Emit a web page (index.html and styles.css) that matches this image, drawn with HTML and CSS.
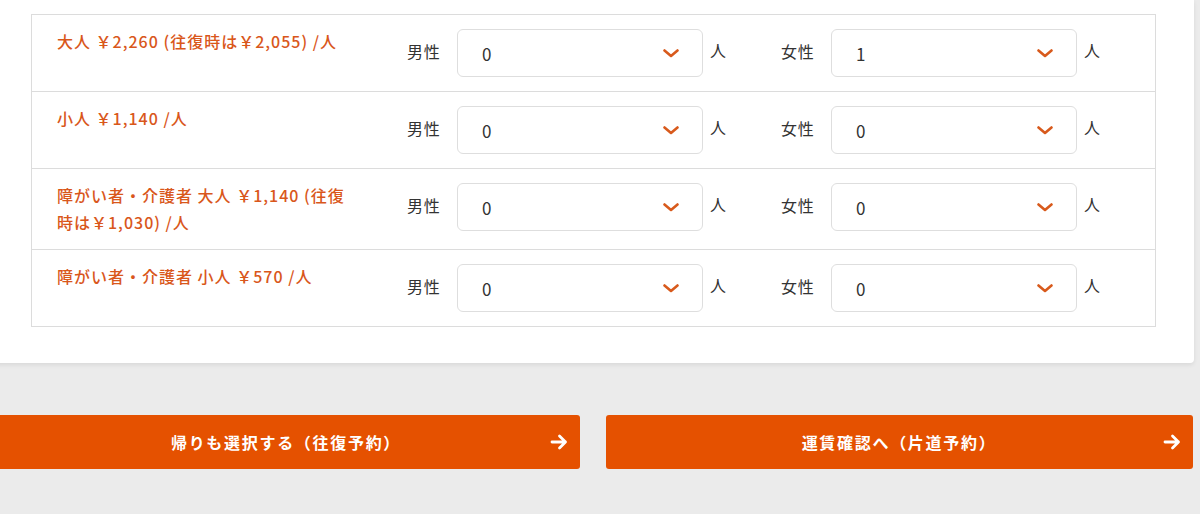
FILE: index.html
```html
<!DOCTYPE html>
<html lang="ja">
<head>
<meta charset="utf-8">
<title>運賃</title>
<link rel="stylesheet" href="styles.css">
</head>
<body>
<div class="page">
  <div class="card">
    <div class="fare-table">
      <div class="fare-row">
        <div class="fare-label">大人 ￥2,260 (往復時は￥2,055) /人</div>
        <div class="gender">
          <span class="g-label">男性</span>
          <div class="select"><span class="val">0</span><svg class="chev" viewBox="0 0 16 9" width="16" height="9"><path d="M1.5 1.5 L8 7 L14.5 1.5" fill="none" stroke="#d85a1c" stroke-width="2.6" stroke-linejoin="round" stroke-linecap="round"/></svg></div>
          <span class="unit">人</span>
        </div>
        <div class="gender">
          <span class="g-label">女性</span>
          <div class="select"><span class="val">1</span><svg class="chev" viewBox="0 0 16 9" width="16" height="9"><path d="M1.5 1.5 L8 7 L14.5 1.5" fill="none" stroke="#d85a1c" stroke-width="2.6" stroke-linejoin="round" stroke-linecap="round"/></svg></div>
          <span class="unit">人</span>
        </div>
      </div>
      <div class="fare-row">
        <div class="fare-label">小人 ￥1,140 /人</div>
        <div class="gender">
          <span class="g-label">男性</span>
          <div class="select"><span class="val">0</span><svg class="chev" viewBox="0 0 16 9" width="16" height="9"><path d="M1.5 1.5 L8 7 L14.5 1.5" fill="none" stroke="#d85a1c" stroke-width="2.6" stroke-linejoin="round" stroke-linecap="round"/></svg></div>
          <span class="unit">人</span>
        </div>
        <div class="gender">
          <span class="g-label">女性</span>
          <div class="select"><span class="val">0</span><svg class="chev" viewBox="0 0 16 9" width="16" height="9"><path d="M1.5 1.5 L8 7 L14.5 1.5" fill="none" stroke="#d85a1c" stroke-width="2.6" stroke-linejoin="round" stroke-linecap="round"/></svg></div>
          <span class="unit">人</span>
        </div>
      </div>
      <div class="fare-row">
        <div class="fare-label">障がい者・介護者 大人 ￥1,140 (往復時は￥1,030) /人</div>
        <div class="gender">
          <span class="g-label">男性</span>
          <div class="select"><span class="val">0</span><svg class="chev" viewBox="0 0 16 9" width="16" height="9"><path d="M1.5 1.5 L8 7 L14.5 1.5" fill="none" stroke="#d85a1c" stroke-width="2.6" stroke-linejoin="round" stroke-linecap="round"/></svg></div>
          <span class="unit">人</span>
        </div>
        <div class="gender">
          <span class="g-label">女性</span>
          <div class="select"><span class="val">0</span><svg class="chev" viewBox="0 0 16 9" width="16" height="9"><path d="M1.5 1.5 L8 7 L14.5 1.5" fill="none" stroke="#d85a1c" stroke-width="2.6" stroke-linejoin="round" stroke-linecap="round"/></svg></div>
          <span class="unit">人</span>
        </div>
      </div>
      <div class="fare-row">
        <div class="fare-label">障がい者・介護者 小人 ￥570 /人</div>
        <div class="gender">
          <span class="g-label">男性</span>
          <div class="select"><span class="val">0</span><svg class="chev" viewBox="0 0 16 9" width="16" height="9"><path d="M1.5 1.5 L8 7 L14.5 1.5" fill="none" stroke="#d85a1c" stroke-width="2.6" stroke-linejoin="round" stroke-linecap="round"/></svg></div>
          <span class="unit">人</span>
        </div>
        <div class="gender">
          <span class="g-label">女性</span>
          <div class="select"><span class="val">0</span><svg class="chev" viewBox="0 0 16 9" width="16" height="9"><path d="M1.5 1.5 L8 7 L14.5 1.5" fill="none" stroke="#d85a1c" stroke-width="2.6" stroke-linejoin="round" stroke-linecap="round"/></svg></div>
          <span class="unit">人</span>
        </div>
      </div>
    </div>
  </div>
  <div class="actions">
    <a class="btn" href="#"><span class="btn-text">帰りも選択する（往復予約）</span><svg class="arrow" viewBox="0 0 18 16" width="18" height="16"><path d="M2 8 H15.5 M9.5 2 L15.5 8 L9.5 14" fill="none" stroke="#fff" stroke-width="2.8" stroke-linecap="round" stroke-linejoin="round"/></svg></a>
    <a class="btn" href="#"><span class="btn-text">運賃確認へ（片道予約）</span><svg class="arrow" viewBox="0 0 18 16" width="18" height="16"><path d="M2 8 H15.5 M9.5 2 L15.5 8 L9.5 14" fill="none" stroke="#fff" stroke-width="2.8" stroke-linecap="round" stroke-linejoin="round"/></svg></a>
  </div>
</div>
</body>
</html>
```

FILE: styles.css
```css
html, body {
  margin: 0;
  padding: 0;
}
body {
  background: #ebebeb;
  font-family: "Noto Sans CJK JP", "Noto Sans", sans-serif;
  color: #333;
  letter-spacing: 0.05em;
  overflow: hidden;
}
.page {
  width: 1201px;
  margin-left: -7px;
}
.card {
  background: #fff;
  padding: 14px 38px 36px;
  box-shadow: 0 2px 4px rgba(0, 0, 0, 0.08);
  border-radius: 0 0 4px 4px;
}
.fare-table {
  border: 1px solid #dcdcdc;
}
.fare-row {
  display: grid;
  grid-template-columns: 374px 374px 374px;
  border-top: 1px solid #dcdcdc;
}
.fare-row:first-child {
  border-top: none;
}
.fare-label {
  padding: 13px 54px 13px 25px;
  font-size: 16px;
  line-height: 27px;
  font-weight: 500;
  letter-spacing: 1px;
  color: #d9571b;
}
.gender {
  display: flex;
  align-items: center;
  align-self: start;
  padding: 14px 0 14px;
}
.g-label {
  font-size: 16px;
  width: 34px;
  margin-left: 1px;
  margin-right: 16px;
  color: #333;
  position: relative;
  top: -2px;
}
.select {
  box-sizing: border-box;
  width: 246px;
  height: 48px;
  border: 1px solid #dedede;
  border-radius: 6px;
  display: flex;
  align-items: center;
  justify-content: space-between;
  padding: 0 23px 0 24px;
}
.val {
  font-size: 17px;
  color: #333;
}
.chev {
  display: block;
}
.unit {
  font-size: 16px;
  margin-left: 7px;
  position: relative;
  top: -3px;
}
.actions {
  display: grid;
  grid-template-columns: 587px 587px;
  column-gap: 26px;
  margin-top: 52px;
}
.btn {
  position: relative;
  display: flex;
  align-items: center;
  justify-content: center;
  height: 54px;
  background: #e55100;
  border-radius: 3px;
  color: #fff;
  text-decoration: none;
  font-size: 16px;
  font-weight: 700;
  letter-spacing: 1.7px;
  padding: 0 35px 0 34px;
}
.arrow {
  position: absolute;
  right: 12px;
  top: 19px;
}
```
